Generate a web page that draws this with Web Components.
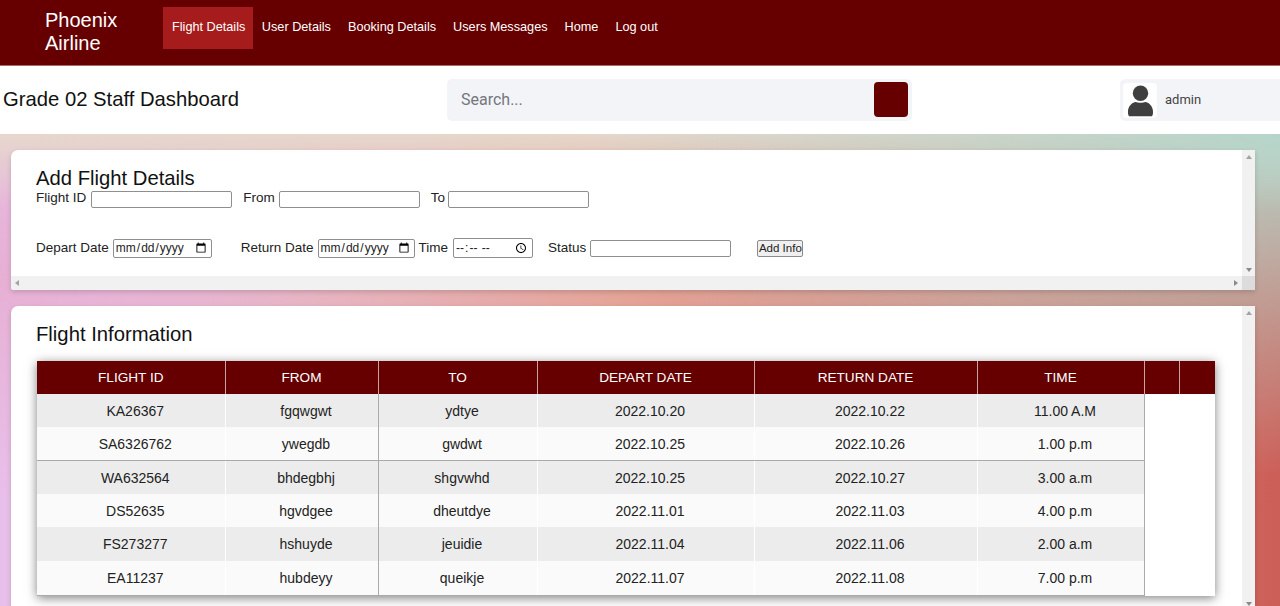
<!DOCTYPE html>
<html><head><meta charset="utf-8"><style>
html,body{margin:0;height:606px;overflow:hidden;background:#fff;font-family:"Liberation Sans",Arial,sans-serif}
body{display:flex;flex-direction:column}
</style></head><body>
<app-nav brand="Phoenix Airline">
<nav-link active>Flight Details</nav-link><nav-link>User Details</nav-link><nav-link>Booking Details</nav-link><nav-link>Users Messages</nav-link><nav-link>Home</nav-link><nav-link>Log out</nav-link>
</app-nav>
<dash-header title-text="Grade 02 Staff Dashboard" user="admin"></dash-header>
<dash-main>
<panel-card horizontal>
<add-flight-form></add-flight-form>
</panel-card>
<panel-card grow>
<flight-table></flight-table>
</panel-card>
</dash-main>
<script>
const def=(name,html,init)=>customElements.define(name,class extends HTMLElement{
 connectedCallback(){ if(this.shadowRoot)return; const r=this.attachShadow({mode:'open'}); r.innerHTML=typeof html==='function'?html(this):html; init&&init(r,this);}
});
def('nav-link',`<style>
:host{display:flex;align-items:center;box-sizing:border-box;height:42px;padding:0 8.5px 2px;color:#fff;font-size:12.7px;white-space:nowrap}
:host([active]){background:#a61c1c;padding:0 8px 2px 9px}
</style><slot></slot>`);
def('app-nav',h=>`<style>
:host{display:flex;align-items:flex-start;box-sizing:border-box;height:66px;flex:none;background:#660000;border-bottom:1px solid #a86a6a;padding:7px 0 0 45px}
.b{width:118px;color:#fff;font-size:20px;line-height:23px;padding-top:2px}
.l{display:flex}
</style><div class="b">Phoenix<br>Airline</div><div class="l"><slot></slot></div>`);
def('dash-header',h=>`<style>
:host{display:flex;align-items:center;flex:none;box-sizing:border-box;height:68px;background:#fff;padding:0 0 0 3px;color:#111}
h1{margin:-2px 0 0;width:444px;font:400 20.25px "Liberation Sans",Arial,sans-serif}
.s{display:flex;align-items:center;box-sizing:border-box;width:465px;height:42px;background:#f3f4f8;border-radius:5px;padding:0 4px 0 14px}
.s span{flex:1;font:16px Roboto,sans-serif;color:#74777c;padding-bottom:2px}
.s i{display:block;width:34px;height:35px;margin-bottom:1px;background:#660000;border-radius:4px}
.u{display:flex;align-items:center;box-sizing:border-box;margin-left:208px;width:160px;height:42px;background:#f3f4f8;border-radius:5px 0 0 5px;padding-left:3px;font:13px Roboto,sans-serif;color:#444}
.u span{padding-bottom:2px}
.a{display:flex;align-items:center;justify-content:center;width:34px;height:35px;background:#fff;border-radius:4px;margin-right:8px}
</style><h1>${h.getAttribute('title-text')}</h1>
<div class="s"><span>Search...</span><i></i></div>
<div class="u"><div class="a"><svg width="25" height="33" viewBox="0 0 26 33"><circle cx="13" cy="9" r="8" fill="#3f3f3f"/><path d="M1 33c-1-2-1-3-1-5 0-6 5-10 8-10 2 1 8 1 10 0 3 0 8 4 8 10 0 2 0 3-1 5z" fill="#3f3f3f"/></svg></div><span>${h.getAttribute('user')}</span></div>`);
def('dash-main',`<style>
:host{display:flex;flex-direction:column;flex:1;min-height:0;overflow:hidden;box-sizing:border-box;padding:16px 25px 0 11px;gap:16px;
background:
 radial-gradient(ellipse 700px 340px at 100% 0,#b6d5ca 0,rgba(182,213,202,0) 100%),
 linear-gradient(to bottom,rgba(230,216,204,.97) 0,rgba(230,216,204,0) 75px),
 radial-gradient(ellipse 300px 220px at 0 30%,rgba(230,172,206,.8) 0,rgba(230,172,206,0) 100%),
 linear-gradient(to right,#e8bfea 0,#e6b2bc 28%,#e4a498 48%,#d8847c 78%,#cc5f58 100%);}
</style><slot></slot>`);
def('panel-card',h=>`<style>
:host{display:grid;grid-template-columns:1fr 13px;grid-template-rows:${h.hasAttribute('horizontal')?'126px 14px':'1fr'};background:#fff;border-radius:7px 0 0 ${h.hasAttribute('horizontal')?'3px':'0'};flex:none;${h.hasAttribute('grow')?'height:301px;':''}box-shadow:0 2px 5px rgba(0,0,0,.16);overflow:hidden}
.c{min-width:0;overflow:hidden}
.v{background:#f1f1f1;display:flex;flex-direction:column;align-items:center;justify-content:space-between;padding:5px 0 0;box-sizing:border-box}
.h{background:#f1f1f1;display:flex;align-items:center;justify-content:space-between;padding:0 19px 0 4px}
.k{background:#dcdcdc}
.t{width:0;height:0;border-style:solid;border-color:transparent}
.up{border-width:0 3.5px 4px;border-bottom-color:#a3a3a3}
.dn{border-width:4px 3.5px 0;border-top-color:#8a8a8a;margin-bottom:${h.hasAttribute('grow')?'1px':'4px'}}
.lf{border-width:3.5px 4px 3.5px 0;border-right-color:#a3a3a3}
.rt{border-width:3.5px 0 3.5px 4px;border-left-color:#8a8a8a;margin-right:-15px}
</style><div class="c"><slot></slot></div><div class="v"><div class="t up"></div><div class="t dn"></div></div>
${h.hasAttribute('horizontal')?'<div class="h"><div class="t lf"></div><div class="t rt"></div></div><div class="k"></div>':''}`);
def('add-flight-form',`<style>
:host{display:block;padding:16px 0 0 25px;color:#222;font-size:13.5px}
h2{margin:0;font:400 20.25px/24px "Liberation Sans",Arial,sans-serif;color:#111;height:25px}
.r{display:flex;align-items:center;white-space:nowrap}
.r1{height:17px}
.r2{height:20px;margin-top:30px}
label{display:block;margin-bottom:4px}
.r2 label{margin-bottom:1px}
input{box-sizing:border-box;margin:0;border:1px solid #8f8f8f;border-radius:2px;background:#fff;font:12px "Liberation Sans",Arial,sans-serif;padding:1px 2px;color:#222}
.t{height:17px}
.d{height:19px;padding:0 2px 0 1px}
button{box-sizing:border-box;width:46px;height:17px;padding:0;margin:0 0 0 26px;font:11.5px "Liberation Sans",Arial,sans-serif;background:#efefef;border:1px solid #8a8a8a;border-radius:2px;color:#222}
</style><h2>Add Flight Details</h2>
<div class="r r1"><label>Flight ID</label><input class="t" style="width:141px;margin:0 11px 0 5px"><label>From</label><input class="t" style="width:141px;margin:0 11px 0 4px"><label>To</label><input class="t" style="width:141px;margin-left:3px"></div>
<div class="r r2"><label>Depart Date</label><input class="d" type="date" style="width:99px;margin:0 29px 0 4px"><label>Return Date</label><input class="d" type="date" style="width:97px;margin:0 4px"><label>Time</label><input class="d" type="time" style="width:80px;height:20px;margin:0 15px 0 5px"><label>Status</label><input class="t" style="width:141px;margin-left:4px"><button>Add Info</button></div>`);
const rows=[["KA26367","fgqwgwt","ydtye","2022.10.20","2022.10.22","11.00 A.M"],["SA6326762","ywegdb","gwdwt","2022.10.25","2022.10.26","1.00 p.m"],["WA632564","bhdegbhj","shgvwhd","2022.10.25","2022.10.27","3.00 a.m"],["DS52635","hgvdgee","dheutdye","2022.11.01","2022.11.03","4.00 p.m"],["FS273277","hshuyde","jeuidie","2022.11.04","2022.11.06","2.00 a.m"],["EA11237","hubdeyy","queikje","2022.11.07","2022.11.08","7.00 p.m"]];
def('flight-table',`<style>
:host{display:block;padding:16px 27px 0 26px;color:#222}
h2{margin:0 0 15px -1px;font:400 20.25px/24px "Liberation Sans",Arial,sans-serif;color:#111}
table{border-collapse:collapse;table-layout:fixed;width:1178px;font-size:14px;box-shadow:0 2px 10px rgba(0,0,0,.5);background:#fff}
th{height:33px;padding:0 0 1px;background:#660000;color:#fff;font-weight:400;font-size:13.6px;border-right:1px solid #c9a3a3;box-sizing:border-box}
th:last-child{border-right:0}
td{height:33.34px;padding:0 0 0 9px;text-align:center;box-sizing:border-box;border-right:1px solid #fff}
tr:last-child td{height:34.5px}
tr.o td.v{background:#ececec}
tr.e td.v{background:#fafafa}
td.g{border-right:1px solid #aaa}
td.x{border:0;background:#fff}
tr.s td.v{border-bottom:1px solid #aaa}
tr:last-child td.v{border-bottom:1px solid #aaa}
</style><h2>Flight Information</h2>
<table><colgroup><col style="width:188px"><col style="width:153px"><col style="width:159px"><col style="width:217px"><col style="width:223px"><col style="width:167px"><col style="width:35px"><col style="width:36px"></colgroup>
<thead><tr><th>FLIGHT ID</th><th>FROM</th><th>TO</th><th>DEPART DATE</th><th>RETURN DATE</th><th>TIME</th><th></th><th></th></tr></thead>
<tbody>${rows.map((r,i)=>`<tr class="${i%2?'e':'o'}${i==1?' s':''}">${r.map((c,j)=>`<td class="v${j==1||j==5?' g':''}">${c}</td>`).join('')}${i==0?'<td class="x" colspan="2" rowspan="6"></td>':''}</tr>`).join('')}</tbody></table>`);
</script>
</body></html>
